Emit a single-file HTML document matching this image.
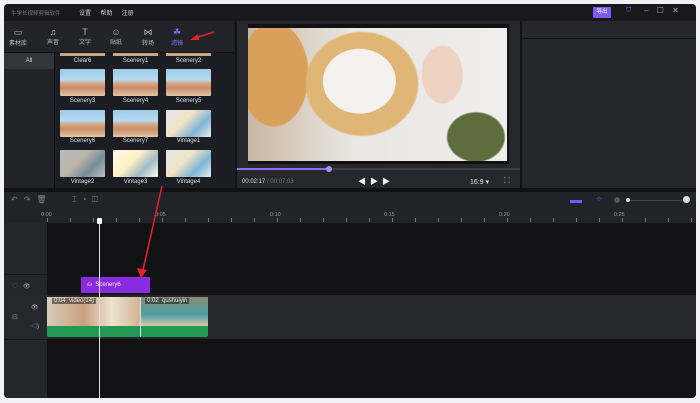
<!DOCTYPE html>
<html><head><meta charset="utf-8"><style>
*{margin:0;padding:0;box-sizing:border-box}
body{width:700px;height:403px;background:#f2f2f4;position:relative;overflow:hidden;font-family:"Liberation Sans","Noto Sans CJK SC",sans-serif;color:#ccc}
.a{position:absolute}
.win{left:4px;top:4px;width:692px;height:394px;background:#1c1d22;border-radius:4px;overflow:hidden}
.t{font-size:6px;color:#bbb;text-align:center}
.th{position:absolute;width:45px;height:27px;border-radius:1px}
.sky{background:linear-gradient(#9ccbe8 0,#b7d9ee 40%,#d8a27c 55%,#c98d6a 70%,#e2c6a4 100%)}
.vin{background:linear-gradient(135deg,#dfe9ef,#f3e4c4 40%,#7fb6d6 70%,#e9eef2)}
.lbl{position:absolute;width:45px;font-size:6px;color:#ddd;text-align:center}
</style></head><body>
<div class="a win">
 <!-- title bar -->
 <div class="a" style="left:0;top:0;width:692px;height:17px;background:#19191d"></div>
 <div class="a" style="left:7px;top:5px;font-size:5.5px;color:#777">牛学长视频剪辑软件</div>
 <div class="a" style="left:75px;top:4px;font-size:6px;color:#ccc;word-spacing:3px">设置 &nbsp;帮助 &nbsp;注册</div>
 <div class="a" style="left:589px;top:3px;width:18px;height:11px;background:#7b5cf0;border-radius:1px;font-size:5.5px;color:#fff;text-align:center;line-height:11px">导出</div>
 <div class="a" style="left:622px;top:3px;font-size:7px;color:#7b5cf0">⛉</div>
 <div class="a" style="left:640px;top:2px;font-size:8px;color:#aaa;word-spacing:6px">– ☐ ✕</div>
 <!-- left toolbar -->
 <div class="a" style="left:0;top:17px;width:230px;height:31px;background:#222328"></div>
 <div class="a" style="left:0;top:48px;width:230px;height:1px;background:#111"></div>
 <div class="a t" style="left:4px;top:23px;width:20px"><div style="font-size:9px">▭</div>素材库</div>
 <div class="a t" style="left:39px;top:23px;width:20px"><div style="font-size:9px">♫</div>声音</div>
 <div class="a t" style="left:71px;top:23px;width:20px"><div style="font-size:9px">T</div>文字</div>
 <div class="a t" style="left:102px;top:23px;width:20px"><div style="font-size:9px">☺</div>贴纸</div>
 <div class="a t" style="left:134px;top:23px;width:20px"><div style="font-size:9px">⋈</div>转场</div>
 <div class="a t" style="left:163px;top:23px;width:20px;color:#8d6cf5"><div style="font-size:9px">☘</div>滤镜</div>
 <!-- category col -->
 <div class="a" style="left:0;top:49px;width:50px;height:138px;background:#222328"></div>
 <div class="a" style="left:0;top:49px;width:50px;height:16px;background:#34353b;font-size:6px;color:#ddd;text-align:center;line-height:16px">All</div>
 <div class="a" style="left:50px;top:49px;width:1px;height:138px;background:#111"></div>
 <!-- grid -->
 <div class="a" style="left:56px;top:49px;width:45px;height:3px;background:#c9a58a"></div>
 <div class="a" style="left:109px;top:49px;width:45px;height:3px;background:#c9a58a"></div>
 <div class="a" style="left:162px;top:49px;width:45px;height:3px;background:#c9a58a"></div>
 <div class="lbl" style="left:56px;top:54px">Clear6</div>
 <div class="lbl" style="left:109px;top:54px">Scenery1</div>
 <div class="lbl" style="left:162px;top:54px">Scenery2</div>
 <div class="th sky" style="left:56px;top:65px"></div><div class="th sky" style="left:109px;top:65px"></div><div class="th sky" style="left:162px;top:65px"></div>
 <div class="lbl" style="left:56px;top:94px">Scenery3</div><div class="lbl" style="left:109px;top:94px">Scenery4</div><div class="lbl" style="left:162px;top:94px">Scenery5</div>
 <div class="th sky" style="left:56px;top:106px"></div><div class="th sky" style="left:109px;top:106px"></div><div class="th vin" style="left:162px;top:106px"></div>
 <div class="lbl" style="left:56px;top:134px">Scenery6</div><div class="lbl" style="left:109px;top:134px">Scenery7</div><div class="lbl" style="left:162px;top:134px">Vintage1</div>
 <div class="th vin" style="left:56px;top:146px;filter:grayscale(.5) brightness(.8)"></div><div class="th vin" style="left:109px;top:146px;filter:sepia(.3)"></div><div class="th vin" style="left:162px;top:146px"></div>
 <div class="lbl" style="left:56px;top:175px">Vintage2</div><div class="lbl" style="left:109px;top:175px">Vintage3</div><div class="lbl" style="left:162px;top:175px">Vintage4</div>
 <!-- preview -->
 <div class="a" style="left:231px;top:17px;width:2px;height:170px;background:#111"></div>
 <div class="a" style="left:233px;top:17px;width:283px;height:170px;background:#26272c"></div>
 <div class="a" style="left:244px;top:20px;width:261px;height:140px;background:#111"></div>
 <div class="a" style="left:244px;top:24px;width:259px;height:133px;background:radial-gradient(ellipse 45px 40px at 43% 40%,#f4f2ee 80%,transparent 82%),radial-gradient(ellipse 65px 60px at 44% 42%,#e0b677 85%,transparent 88%),radial-gradient(ellipse 40px 60px at 10% 35%,#d8a05a 85%,transparent 88%),radial-gradient(ellipse 35px 30px at 88% 82%,#5e6d3e 80%,transparent 85%),radial-gradient(ellipse 25px 35px at 75% 35%,#efd3c2 80%,transparent 85%),linear-gradient(90deg,#c9b8a2,#e9e7e3 40%,#f0eeec)"></div>
 <div class="a" style="left:233px;top:164px;width:283px;height:2px;background:#3a3b42"></div>
 <div class="a" style="left:233px;top:164px;width:92px;height:2px;background:#8d6cf5"></div>
 <div class="a" style="left:322px;top:162px;width:6px;height:6px;border-radius:50%;background:#a795f5"></div>
 <div class="a" style="left:238px;top:175px;font-size:6px;color:#ddd">00:02:17 <span style="color:#777">/ 00:07:03</span></div>
 <div class="a" style="left:354px;top:172px;font-size:8px;color:#eee;letter-spacing:4px">◀▶▶</div>
 <div class="a" style="left:466px;top:174px;font-size:7px;color:#ddd">16:9 ▾</div>
 <div class="a" style="left:500px;top:172px;font-size:8px;color:#999">⛶</div>
 <!-- right panel -->
 <div class="a" style="left:516px;top:17px;width:2px;height:170px;background:#111"></div>
 <div class="a" style="left:518px;top:17px;width:174px;height:170px;background:#25262b"></div>
 <div class="a" style="left:518px;top:34px;width:174px;height:1px;background:#131316"></div>
 <div class="a" style="left:0;top:184px;width:692px;height:4px;background:#111"></div>
 <!-- timeline toolbar -->
 <div class="a" style="left:0;top:188px;width:692px;height:16px;background:#222328"></div>
 <div class="a" style="left:7px;top:191px;font-size:8px;color:#888;letter-spacing:6px">↶↷🗑</div>
 <div class="a" style="left:68px;top:191px;font-size:8px;color:#888;letter-spacing:5px">⌶◔◫</div>
 <div class="a" style="left:566px;top:196px;width:12px;height:3px;background:#7b5cf0"></div>
 <div class="a" style="left:592px;top:191px;font-size:7px;color:#7b5cf0">⊹</div>
 <div class="a" style="left:610px;top:193px;width:6px;height:6px;border-radius:50%;background:#555"></div>
 <div class="a" style="left:622px;top:194px;width:4px;height:4px;border-radius:50%;background:#ddd"></div>
 <div class="a" style="left:626px;top:196px;width:52px;height:1px;background:#444"></div>
 <div class="a" style="left:679px;top:192px;width:7px;height:7px;border-radius:50%;background:#ddd"></div>
 <!-- ruler -->
 <div class="a" style="left:0;top:204px;width:692px;height:15px;background:#222328"></div>
 <div class="a" style="left:42px;top:208px;font-size:5.5px;color:#999;width:650px">
  <span class="a" style="left:-5px">0:00</span><span class="a" style="left:109px">0:05</span><span class="a" style="left:224px">0:10</span><span class="a" style="left:338px">0:15</span><span class="a" style="left:453px">0:20</span><span class="a" style="left:568px">0:25</span></div>
 <div class="a" style="left:43px;top:214px;width:649px;height:4px;background:repeating-linear-gradient(90deg,#777 0 1px,transparent 1px 23px)"></div>
 <!-- tracks -->
 <div class="a" style="left:0;top:219px;width:43px;height:175px;background:#25262b"></div>
 <div class="a" style="left:43px;top:219px;width:649px;height:175px;background:#121215"></div>
 <div class="a" style="left:0;top:270px;width:43px;height:1px;background:#18181b"></div>
 <div class="a" style="left:0;top:291px;width:692px;height:44px;background:#26272c"></div>
 <div class="a" style="left:0;top:335px;width:43px;height:1px;background:#18181b"></div>
 <div class="a" style="left:8px;top:277px;font-size:6px;color:#666">◇ &nbsp;&nbsp;<span style="color:#aaa">👁</span></div>
 <div class="a" style="left:27px;top:300px;font-size:6px;color:#aaa">👁</div>
 <div class="a" style="left:8px;top:309px;font-size:7px;color:#888">⊟</div>
 <div class="a" style="left:27px;top:317px;font-size:6px;color:#aaa">◁)</div>
 <!-- filter clip -->
 <div class="a" style="left:77px;top:273px;width:69px;height:16px;background:#8a2be2;border-radius:1px;font-size:6px;color:#eee;line-height:16px;padding-left:6px">⛀ &nbsp;Scenery6</div>
 <!-- video clips -->
 <div class="a" style="left:43px;top:293px;width:93px;height:29px;background:linear-gradient(90deg,#d9cbb9,#c7a27e 40%,#eee3d2 70%,#d1b592)"></div>
 <div class="a" style="left:137px;top:293px;width:67px;height:29px;background:linear-gradient(#8a8a74,#4aa0a8 60%,#d9c9a5)"></div>
 <div class="a" style="left:43px;top:322px;width:161px;height:11px;background:#229a55;border-radius:0 0 2px 2px"></div>
 <div class="a" style="left:136px;top:293px;width:1px;height:40px;background:#ddd"></div>
 <div class="a" style="left:48px;top:294px;font-size:6px;color:#eee;background:rgba(0,0,0,.45);padding:0 2px">0:04 &nbsp;video(14)</div>
 <div class="a" style="left:141px;top:294px;font-size:6px;color:#eee;background:rgba(0,0,0,.45);padding:0 2px">0:02 &nbsp;qushuiyin</div>
 <!-- playhead -->
 <div class="a" style="left:95px;top:219px;width:1px;height:175px;background:#ddd"></div>
 <div class="a" style="left:93px;top:214px;width:5px;height:6px;background:#fff;border-radius:1px"></div>
</div>
<!-- red arrows -->
<svg class="a" style="left:0;top:0" width="700" height="403">
 <line x1="214" y1="32" x2="195" y2="38" stroke="#e8202a" stroke-width="1.5"/>
 <polygon points="190,40 198,34 199,40" fill="#e8202a"/>
 <line x1="162" y1="186" x2="143" y2="270" stroke="#e8202a" stroke-width="1.5"/>
 <polygon points="141,278 137,268 147,270" fill="#e8202a"/>
</svg>
</body></html>
